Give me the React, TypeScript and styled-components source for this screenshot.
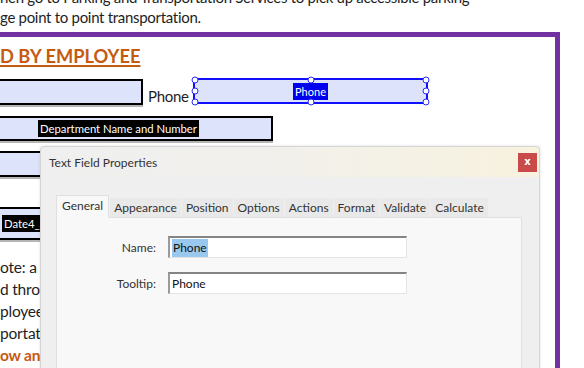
import React from "react";
import styled, { createGlobalStyle } from "styled-components";

const Global = createGlobalStyle`
  html, body { margin: 0; padding: 0; background: #fff; }
  body { width: 584px; height: 368px; overflow: hidden; }
`;

const Page = styled.div`
  position: relative;
  width: 584px;
  height: 368px;
  overflow: hidden;
  background: #fff;
  font-family: Lato, "Liberation Sans", sans-serif;
  color: #1e1e1e;
`;

const Intro = styled.div`
  margin-top: -13px;
  font-size: 15px;
  letter-spacing: -0.3px;
  line-height: 20px;
  white-space: nowrap;
`;

const Frame = styled.div`
  box-sizing: border-box;
  margin-top: 5px;
  margin-left: -20px;
  width: 580px;
  height: 360px;
  padding-left: 20px;
  border-top: 5px solid #7232a2;
  border-right: 5px solid #7232a2;
`;

const Heading = styled.div`
  margin-top: 7px;
  font-size: 18.3px;
  line-height: 24px;
  font-weight: 700;
  color: #c55a11;
  text-decoration: underline;
  text-decoration-thickness: 2px;
  text-underline-offset: 2px;
  white-space: nowrap;
`;

const FieldRow = styled.div<{ $top: number }>`
  display: flex;
  align-items: flex-start;
  margin-top: ${(p) => p.$top}px;
`;

const FieldBox = styled.div<{ $left: number; $width: number; $height: number; $offset?: number; $start?: boolean }>`
  box-sizing: border-box;
  margin-left: ${(p) => p.$left}px;
  margin-top: ${(p) => p.$offset ?? 0}px;
  width: ${(p) => p.$width}px;
  height: ${(p) => p.$height}px;
  border: 2px solid #000;
  background: #dde3fb;
  box-shadow: 0 2px 0 #b5b5b5;
  display: flex;
  align-items: center;
  justify-content: ${(p) => (p.$start ? "flex-start" : "center")};
  padding-left: ${(p) => (p.$start ? 20 : 0)}px;
  flex-shrink: 0;
`;

const FieldName = styled.span<{ $blue?: boolean }>`
  background: ${(p) => (p.$blue ? "#0000ee" : "#000")};
  color: #fff;
  font-size: ${(p) => (p.$blue ? 11 : 11.3)}px;
  line-height: 17px;
  padding: 0 2px;
  white-space: nowrap;
`;

const InlineLabel = styled.span`
  width: 50px;
  padding-left: 5px;
  box-sizing: border-box;
  font-size: 15px;
  letter-spacing: -0.3px;
  line-height: 20px;
  margin-top: 8px;
  flex-shrink: 0;
`;

const SelectedField = styled.div`
  position: relative;
  box-sizing: border-box;
  width: 235px;
  height: 26px;
  border: 2px solid #1010ff;
  background: #dde3fb;
  display: flex;
  align-items: center;
  justify-content: center;
  flex-shrink: 0;
`;

const Handle = styled.span<{ $x: string; $y: string }>`
  position: absolute;
  left: ${(p) => p.$x};
  top: ${(p) => p.$y};
  width: 7px;
  height: 7px;
  box-sizing: border-box;
  border: 1.5px solid #2a2aff;
  border-radius: 50%;
  background: #fff;
  transform: translate(-50%, -50%);
`;

const BodyText = styled.div`
  margin-top: 16px;
  font-size: 15.5px;
  letter-spacing: -0.2px;
  line-height: 22px;
  white-space: nowrap;
`;

const Line = styled.div<{ $accent?: boolean }>`
  color: ${(p) => (p.$accent ? "#c55a11" : "inherit")};
  font-weight: ${(p) => (p.$accent ? 700 : 400)};
`;

const Dialog = styled.div`
  position: absolute;
  left: 40px;
  top: 146px;
  width: 500px;
  height: 240px;
  box-sizing: border-box;
  border: 1px solid #d4d4d4;
  border-radius: 4px 4px 0 0;
  background: #efefef;
  box-shadow: 0 0 3px rgba(0, 0, 0, 0.12);
  display: flex;
  flex-direction: column;
  font-family: Lato, "Noto Sans", sans-serif;
  color: #333;
`;

const TitleBar = styled.div`
  height: 30px;
  flex-shrink: 0;
  display: flex;
  align-items: center;
  justify-content: space-between;
  padding: 0 2px 0 8px;
  border-radius: 4px 4px 0 0;
  background: linear-gradient(to right, #efefef 0%, #f1f0ec 45%, #f8f2de 100%);
`;

const Title = styled.span`
  font-size: 12px;
  color: #333;
`;

const CloseButton = styled.span`
  width: 19px;
  height: 19px;
  background: #c84a4b;
  color: #fff;
  font-size: 10px;
  font-weight: 700;
  line-height: 18px;
  text-align: center;
  font-family: "DejaVu Sans", sans-serif;
`;

const DialogBody = styled.div`
  flex: 1;
  display: flex;
  flex-direction: column;
  padding: 18px 17px 0 15px;
`;

const TabStrip = styled.div`
  display: flex;
  align-items: flex-end;
  height: 22px;
  position: relative;
  z-index: 1;
`;

const Tab = styled.div<{ $active?: boolean }>`
  box-sizing: border-box;
  height: ${(p) => (p.$active ? 23 : 19)}px;
  margin-bottom: ${(p) => (p.$active ? -1 : 0)}px;
  margin-right: 1px;
  padding: 0 ${(p) => (p.$active ? 5 : 4)}px;
  font-size: 12px;
  line-height: 19px;
  background: ${(p) => (p.$active ? "#f8f8f8" : "#e9e9e9")};
  border: ${(p) => (p.$active ? "1px solid #e0e0e0" : "none")};
  border-bottom: none;
  color: #333;
  white-space: nowrap;
`;

const Panel = styled.div`
  flex: 1;
  width: 466px;
  box-sizing: border-box;
  background: #f8f8f8;
  border: 1px solid #e0e0e0;
  padding-top: 18px;
`;

const FormGrid = styled.div`
  display: grid;
  grid-template-columns: 99px 239px;
  column-gap: 12px;
  row-gap: 14px;
  align-items: center;
`;

const FormLabel = styled.span`
  text-align: right;
  font-size: 12px;
  color: #333;
`;

const InputBox = styled.div`
  box-sizing: border-box;
  height: 22px;
  background: #fff;
  border-top: 2px solid #848484;
  border-left: 2px solid #9a9a9a;
  border-right: 1px solid #e4e4e4;
  border-bottom: 1px solid #e4e4e4;
  display: flex;
  align-items: center;
  padding-left: 2px;
  font-size: 12px;
  color: #111;
`;

const Selection = styled.span`
  background: #99c8ee;
  padding: 1px 1px 2px;
`;

const tabs = ["General", "Appearance", "Position", "Options", "Actions", "Format", "Validate", "Calculate"];

const handles: Array<[string, string]> = [
  ["0%", "0%"], ["50%", "0%"], ["100%", "0%"],
  ["0%", "50%"], ["100%", "50%"],
  ["0%", "100%"], ["50%", "100%"], ["100%", "100%"],
];

export default function App() {
  return (
    <Page>
      <Global />
      <Intro>
        <div>hen go to Parking and Transportation Services to pick up accessible parking</div>
        <div>ge point to point transportation.</div>
      </Intro>
      <Frame>
        <Heading>D BY EMPLOYEE</Heading>
        <FieldRow $top={10}>
          <FieldBox $left={-40} $width={183} $height={26} $offset={1} />
          <InlineLabel>Phone</InlineLabel>
          <SelectedField>
            <FieldName $blue>Phone</FieldName>
            {handles.map(([x, y]) => (
              <Handle key={x + y} $x={x} $y={y} />
            ))}
          </SelectedField>
        </FieldRow>
        <FieldRow $top={10}>
          <FieldBox $left={-36} $width={309} $height={25}>
            <FieldName>Department Name and Number</FieldName>
          </FieldBox>
        </FieldRow>
        <FieldRow $top={10}>
          <FieldBox $left={-40} $width={200} $height={26} />
        </FieldRow>
        <FieldRow $top={30}>
          <FieldBox $left={-20} $width={140} $height={33} $start>
            <FieldName>Date4_af_date</FieldName>
          </FieldBox>
        </FieldRow>
        <BodyText>
          <Line>ote: a copy of this form</Line>
          <Line>d through the</Line>
          <Line>ployee</Line>
          <Line>portation</Line>
          <Line $accent>ow and</Line>
        </BodyText>
      </Frame>
      <Dialog>
        <TitleBar>
          <Title>Text Field Properties</Title>
          <CloseButton>x</CloseButton>
        </TitleBar>
        <DialogBody>
          <TabStrip>
            {tabs.map((t, i) => (
              <Tab key={t} $active={i === 0}>
                {t}
              </Tab>
            ))}
          </TabStrip>
          <Panel>
            <FormGrid>
              <FormLabel>Name:</FormLabel>
              <InputBox>
                <Selection>Phone</Selection>
              </InputBox>
              <FormLabel>Tooltip:</FormLabel>
              <InputBox>Phone</InputBox>
            </FormGrid>
          </Panel>
        </DialogBody>
      </Dialog>
    </Page>
  );
}
